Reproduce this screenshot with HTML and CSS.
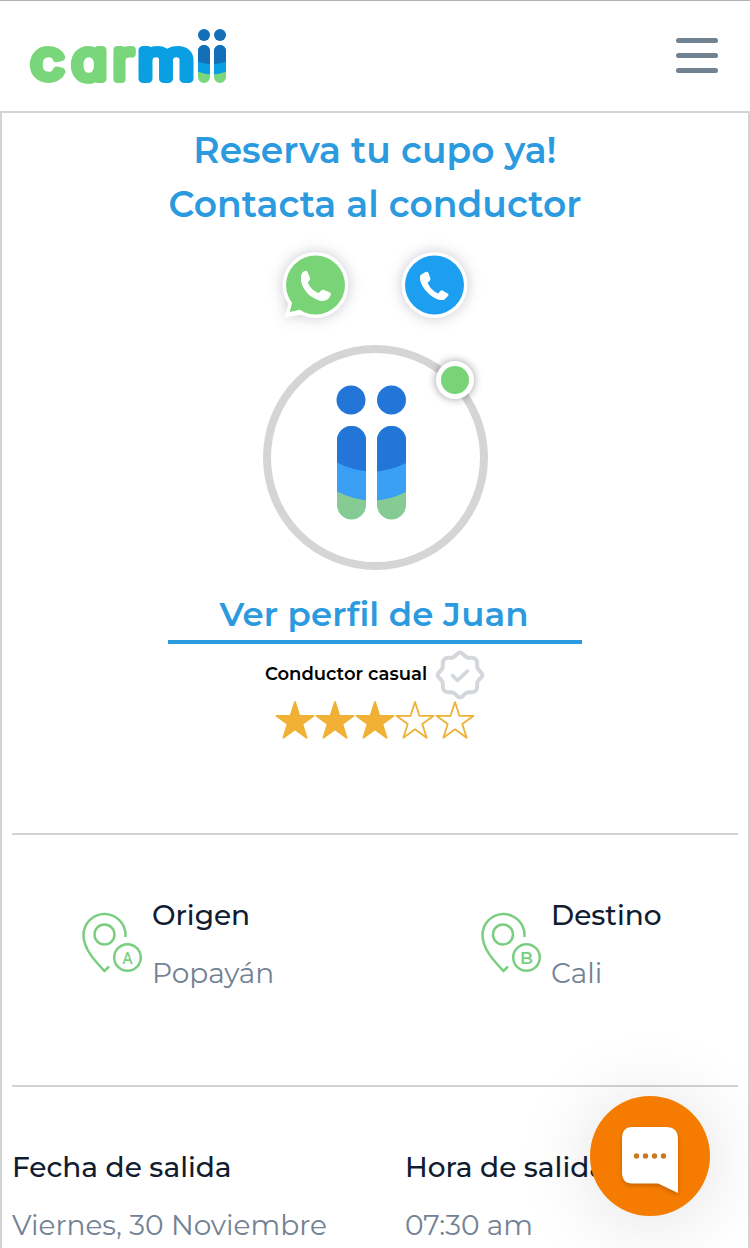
FILE: index.html
```html
<!DOCTYPE html>
<html lang="es">
<head>
  <meta charset="UTF-8" />
  <meta name="viewport" content="width=device-width, initial-scale=1.0"/>
  <title>Carmii</title>
  <link rel="stylesheet" href="styles.css">
</head>
<body>
  <header class="navbar">
    <svg class="logo" width="200" height="60" viewBox="0 0 200 60">
      <defs>
        <clipPath id="logoBars">
          <rect x="168" y="19" width="12" height="38" rx="6"/>
          <rect x="184" y="19" width="12" height="38" rx="6"/>
        </clipPath>
      </defs>
      <text class="logo-text green" y="52.500" x="1" textLength="33" lengthAdjust="spacingAndGlyphs">c</text>
      <text class="logo-text green" y="52.500" x="42" textLength="35" lengthAdjust="spacingAndGlyphs">a</text>
      <text class="logo-text green" y="52.500" x="83" textLength="20" lengthAdjust="spacingAndGlyphs">r</text>
      <text class="logo-text blue" y="52.500" x="108" textLength="56" lengthAdjust="spacingAndGlyphs">m</text>
      <circle cx="174" cy="9" r="6" fill="#136fb8"/>
      <circle cx="190" cy="9" r="6" fill="#136fb8"/>
      <g clip-path="url(#logoBars)">
        <rect x="166" y="17" width="32" height="42" fill="#7ad67a"/>
        <path d="M166 17h32v28q-16 7-32 0z" fill="#0a9ee2"/>
        <path d="M166 17h32v18q-16 6-32 0z" fill="#136fb8"/>
      </g>
    </svg>
    <button class="menu-btn" aria-label="Menú"><span></span><span></span><span></span></button>
  </header>

  <main class="trip">
    <section class="driver">
      <h1 class="title">Reserva tu cupo ya!<br>Contacta al conductor</h1>

      <div class="contact">
        <svg class="contact-icon" width="70" height="70" viewBox="0 0 70 70">
          <circle cx="34.500" cy="35" r="33" fill="#fff"/>
          <path d="M8 52L3.500 67.500L22 64.500Z" fill="#fff"/>
          <circle cx="34.500" cy="35" r="29.500" fill="#79d478"/>
          <path d="M11.500 51L8.800 62L20 59.500Z" fill="#79d478"/>
          <path class="phone" d="M21 23c3-3 5-3 6 0l2 5c1 2-2 3-2 5 2 5 6 8 10 10 2 0 3-4 6-3l5 2c3 1 2 3 0 6-4 5-11 3-17-1C25 43 17 33 21 23z"/>
        </svg>
        <svg class="contact-icon" width="70" height="70" viewBox="0 0 70 70">
          <circle cx="34.500" cy="35" r="33" fill="#fff"/>
          <circle cx="34.500" cy="35" r="29.500" fill="#1c9ff0"/>
          <path class="phone" d="M20.500 25l5-3q2-1 3 1l2 6q0 2-3 3.500c2 5 6 9 11 11q2-4 4-3l5 3q2 1 0 3l-3 3c-4 2-11-1-17-7-6-6-9-14-7-17.500z"/>
        </svg>
      </div>

      <div class="avatar">
        <svg width="72" height="136" viewBox="0 0 72 136">
          <defs>
            <clipPath id="avatarBars">
              <rect x="1" y="41" width="29" height="93.500" rx="14.500"/>
              <rect x="41" y="41" width="29" height="93.500" rx="14.500"/>
            </clipPath>
          </defs>
          <circle cx="15" cy="15" r="14.500" fill="#2376d8"/>
          <circle cx="55.500" cy="15" r="14.500" fill="#2376d8"/>
          <g clip-path="url(#avatarBars)">
            <rect y="40" width="72" height="96" fill="#86ca94"/>
            <path d="M0 40h72v66q-36 19-72 0z" fill="#3aa0f6"/>
            <path d="M0 40h72v37q-36 19-72 0z" fill="#2376d8"/>
          </g>
        </svg>
        <span class="status"></span>
      </div>

      <a class="profile-link" href="#">Ver perfil de Juan</a>

      <div class="level">
        <span class="level-name">Conductor casual</span>
        <svg width="50" height="50" viewBox="0 0 50 50" fill="none" stroke="#d3d7db" stroke-width="4" stroke-linecap="round" stroke-linejoin="round">
          <path d="M25 2.500C28 2.500 29.500 7.500 33 7.800C36 8 38.500 7 40.800 9.200C43 11.500 42 14 42.200 17C42.500 20.500 47.500 22 47.500 25C47.500 28 42.500 29.500 42.200 33C42 36 43 38.500 40.800 40.800C38.500 43 36 42 33 42.200C29.500 42.500 28 47.500 25 47.500C22 47.500 20.500 42.500 17 42.200C14 42 11.500 43 9.200 40.800C7 38.500 8 36 7.800 33C7.500 29.500 2.500 28 2.500 25C2.500 22 7.500 20.500 7.800 17C8 14 7 11.500 9.200 9.200C11.500 7 14 8 17 7.800C20.500 7.500 22 2.500 25 2.500Z"/>
          <path d="M17.500 25.500l5 5 10-9.500" stroke-width="3.500"/>
        </svg>
      </div>

      <div class="stars">
        <svg class="star full" viewBox="0 0 40 40"><path d="M20 2l4.400 13.800h14.200L27.300 24.100l4.300 13.700L20 29.300 8.400 37.800l4.300-13.700L1.400 15.800h14.200z"/></svg>
        <svg class="star full" viewBox="0 0 40 40"><path d="M20 2l4.400 13.800h14.200L27.300 24.100l4.300 13.700L20 29.300 8.400 37.800l4.300-13.700L1.400 15.800h14.200z"/></svg>
        <svg class="star full" viewBox="0 0 40 40"><path d="M20 2l4.400 13.800h14.200L27.300 24.100l4.300 13.700L20 29.300 8.400 37.800l4.300-13.700L1.400 15.800h14.200z"/></svg>
        <svg class="star" viewBox="0 0 40 40"><path d="M20 2l4.400 13.800h14.200L27.300 24.100l4.300 13.700L20 29.300 8.400 37.800l4.300-13.700L1.400 15.800h14.200z"/></svg>
        <svg class="star" viewBox="0 0 40 40"><path d="M20 2l4.400 13.800h14.200L27.300 24.100l4.300 13.700L20 29.300 8.400 37.800l4.300-13.700L1.400 15.800h14.200z"/></svg>
      </div>
    </section>

    <section class="places">
      <div class="place">
        <svg class="pin" width="64" height="64" viewBox="0 0 64 64">
          <path d="M45.500 25V23A21 21 0 0 0 3.500 23C3.500 37 15 49 24.500 59L29 54.500"/>
          <circle cx="24.500" cy="22.500" r="10"/>
          <circle cx="47.500" cy="45.500" r="13.300"/>
          <text x="47.500" y="51.500" textLength="10" lengthAdjust="spacingAndGlyphs">A</text>
        </svg>
        <div class="info">
          <span class="label">Origen</span>
          <span class="value">Popayán</span>
        </div>
      </div>
      <div class="place">
        <svg class="pin" width="64" height="64" viewBox="0 0 64 64">
          <path d="M45.500 25V23A21 21 0 0 0 3.500 23C3.500 37 15 49 24.500 59L29 54.500"/>
          <circle cx="24" cy="22.500" r="10"/>
          <circle cx="47.500" cy="45.500" r="13.300"/>
          <text x="47.500" y="51.500">B</text>
        </svg>
        <div class="info">
          <span class="label">Destino</span>
          <span class="value">Cali</span>
        </div>
      </div>
    </section>

    <section class="schedule">
      <div class="info">
        <span class="label">Fecha de salida</span>
        <span class="value">Viernes, 30 Noviembre</span>
      </div>
      <div class="info">
        <span class="label">Hora de salida</span>
        <span class="value">07:30 am</span>
      </div>
    </section>
  </main>

  <button class="chat" aria-label="Chat">
    <svg width="60" height="70" viewBox="0 0 60 70">
      <path d="M12 1H46Q58 1 58 13V67L38 57.500H12Q2 57.500 2 46V13Q2 1 12 1Z" fill="#fff"/>
      <g fill="#c9781d">
        <circle cx="16.500" cy="30" r="2.700"/>
        <circle cx="25.500" cy="30" r="2.700"/>
        <circle cx="34.500" cy="30" r="2.700"/>
        <circle cx="43.500" cy="30" r="2.700"/>
      </g>
    </svg>
  </button>
</body>
</html>
```
FILE: styles.css
```css
* {
  box-sizing: border-box;
}

body {
  margin: 0;
  height: 1248px;
  overflow: hidden;
  font-family: Montserrat, Inter, sans-serif;
  background: #fff;
  color: #111c30;
}

button {
  border: none;
  padding: 0;
  background: none;
  cursor: pointer;
}

.navbar {
  display: flex;
  align-items: center;
  justify-content: space-between;
  height: 111px;
  padding: 0 32px 0 28px;
  border-top: 1px solid #b0b3b3;
}

.logo {
  display: block;
  margin-left: 2px;
  overflow: visible;
}

.logo-text {
  font-family: Inter, sans-serif;
  font-feature-settings: "cv11";
  font-size: 53px;
  font-weight: 300;
  stroke-width: 8px;
  stroke-linejoin: round;
}

.logo-text.green { fill: #7ad67a; stroke: #7ad67a; }
.logo-text.blue { fill: #0a9ee2; stroke: #0a9ee2; }

.menu-btn {
  display: flex;
  flex-direction: column;
  gap: 10px;
  margin-bottom: 1px;
}

.menu-btn span {
  width: 42px;
  height: 5px;
  border-radius: 3px;
  background: #718292;
}

.trip {
  height: 1137px;
  padding: 10px 10px 0;
  border: 2px solid #d3d3d3;
  border-bottom: none;
}

.driver {
  display: flex;
  flex-direction: column;
  align-items: center;
  height: 712px;
  border-bottom: 2px solid #d3d3d3;
}

.title {
  margin: 0;
  font-size: 36px;
  font-weight: 600;
  line-height: 54px;
  letter-spacing: 0.08px;
  text-align: center;
  color: #2b9ade;
}

.contact {
  display: flex;
  gap: 49px;
  margin-top: 19px;
}

.contact-icon {
  overflow: visible;
  filter: drop-shadow(0 0 7px rgba(40, 40, 70, 0.25));
}

.phone { fill: #fff; }

.avatar {
  position: relative;
  display: flex;
  justify-content: center;
  width: 225px;
  height: 225px;
  margin-top: 25px;
  padding: 32px 7px 0 0;
  border: 8px solid #d5d5d5;
  border-radius: 50%;
}

.status {
  position: absolute;
  top: 8px;
  right: 6px;
  width: 38px;
  height: 38px;
  border: 5px solid #fff;
  border-radius: 50%;
  background: #79d478;
  box-shadow: 0 0 8px rgba(0, 0, 0, 0.4);
}

.profile-link {
  width: 414px;
  height: 56px;
  margin-top: 18px;
  padding-right: 2px;
  border-bottom: 4px solid #2b9ade;
  font-size: 34px;
  font-weight: 600;
  letter-spacing: 0.12px;
  line-height: 52px;
  text-align: center;
  text-decoration: none;
  color: #2b9ade;
}

.level {
  display: flex;
  align-items: center;
  gap: 8px;
  height: 50px;
  margin-top: 6px;
}

.level-name {
  padding-bottom: 2px;
  font-size: 18px;
  font-weight: 600;
  color: #000;
}

.stars {
  display: flex;
}

.star {
  width: 40px;
  height: 40px;
  fill: none;
  stroke: #efb036;
  stroke-width: 1.8;
  stroke-linejoin: round;
}

.star.full { fill: #f2b134; }

.places {
  display: flex;
  height: 252px;
  padding: 51px 0 0 68px;
  border-bottom: 2px solid #d3d3d3;
}

.place {
  display: flex;
  flex: none;
  width: 399px;
}

.place:last-child { width: 259px; }

.pin {
  flex: none;
  margin: 26px 8px 0 0;
  fill: none;
  stroke: #7bce80;
  stroke-width: 2.5;
}

.pin text {
  fill: #7bce80;
  stroke: none;
  font-size: 17px;
  font-weight: 600;
  text-anchor: middle;
}

.info {
  display: flex;
  flex-direction: column;
  gap: 16px;
  font-size: 28px;
  line-height: 42px;
  padding-top: 8px;
  white-space: nowrap;
}

.label {
  font-weight: 500;
}

.value {
  font-weight: 400;
  color: #738294;
}

.schedule {
  display: flex;
  padding-top: 51px;
}

.schedule .info {
  flex: none;
  width: 393px;
}

.schedule .info:last-child { width: 333px; }

/* floating chat launcher */
.chat {
  position: fixed;
  right: 40px;
  bottom: 32px;
  width: 120px;
  height: 120px;
  border-radius: 50%;
  background: #f57c00;
  box-shadow: 0 4px 80px rgba(0, 0, 0, 0.13);
}

.chat svg {
  display: block;
  margin: 9px auto 0;
  filter: drop-shadow(0 2px 2px rgba(0, 0, 0, 0.2));
}
```
